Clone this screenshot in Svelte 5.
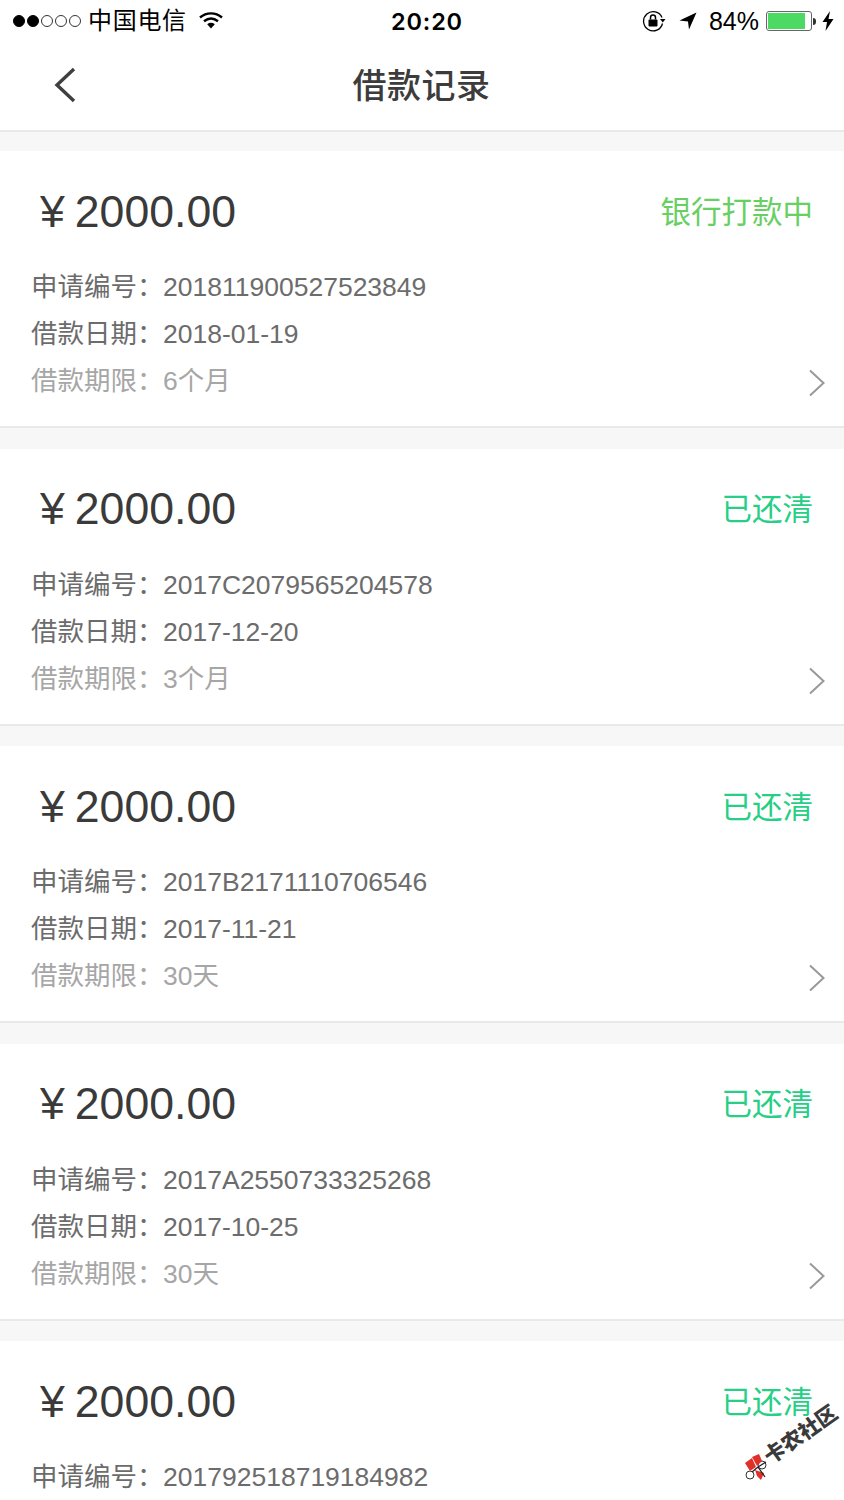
<script>
  const records = [
    { no: '201811900527523849', date: '2018-01-19', term: '6个月', status: '银行打款中', paying: true },
    { no: '2017C2079565204578', date: '2017-12-20', term: '3个月', status: '已还清' },
    { no: '2017B2171110706546', date: '2017-11-21', term: '30天', status: '已还清' },
    { no: '2017A2550733325268', date: '2017-10-25', term: '30天', status: '已还清' },
    { no: '201792518719184982', date: '2017-09-25', term: '30天', status: '已还清' }
  ];
</script>

<div class="page">
  <header class="status">
    <div class="side left">
      <span class="dots">
        <i class="on"></i><i class="on"></i><i></i><i></i><i></i>
      </span>
      <span class="carrier">中国电信</span>
      <svg class="wifi" width="26" height="18" viewBox="0 0 26 18">
        <path d="M2 6.500C8.500 1 17.500 1 24 6.500" fill="none" stroke="#000" stroke-width="2.400" />
        <path d="M6 10.200C10.500 6.600 15.500 6.600 20 10.200" fill="none" stroke="#000" stroke-width="2.400" />
        <path d="M9.200 13.200C11.500 11.400 14.500 11.400 16.800 13.200L13 17.400Z" fill="#000" />
      </svg>
    </div>
    <div class="clock">20:20</div>
    <div class="side right">
      <svg class="lock" width="24" height="22" viewBox="0 0 24 22">
        <path d="M20.500 13.500A9.600 9.600 0 1 1 20 7.500" fill="none" stroke="#000" stroke-width="1.300" />
        <path d="M18 9h5.500l-2.700 3.500Z" fill="#000" />
        <rect x="6.500" y="9.500" width="9" height="7" rx="1" fill="#000" />
        <path d="M8.500 9.500V7.500a2.500 2.500 0 0 1 5 0v2" fill="none" stroke="#000" stroke-width="1.500" />
      </svg>
      <svg class="arrow" width="18" height="18" viewBox="0 0 18 18">
        <path d="M17.500 0.500L0.500 8.500L9 9.500L10 17.500Z" fill="#000" />
      </svg>
      <span class="pct">84%</span>
      <span class="battery"><span class="level"></span></span>
      <span class="nub"></span>
      <svg class="bolt" width="12" height="20" viewBox="0 0 12 20">
        <path d="M8 0L0.500 11H5L3.500 20L11.500 8H6.500Z" fill="#000" />
      </svg>
    </div>
  </header>

  <nav class="bar">
    <svg class="back" width="24" height="36" viewBox="0 0 24 36">
      <path d="M21 2L4 18L21 34" fill="none" stroke="#3f3f3f" stroke-width="3.400" />
    </svg>
    <h1>借款记录</h1>
  </nav>

  <main class="list">
    {#each records as r}
      <section class="card">
        <div class="top">
          <div class="amount"><span class="yen">¥</span>2000.00</div>
          <div class="state" class:paying={r.paying}>{r.status}</div>
        </div>
        <dl>
          <div class="row"><dt>申请编号：</dt><dd>{r.no}</dd></div>
          <div class="row"><dt>借款日期：</dt><dd>{r.date}</dd></div>
          <div class="row faint"><dt>借款期限：</dt><dd>{r.term}</dd></div>
        </dl>
        <svg class="chev" width="18" height="28" viewBox="0 0 18 28">
          <path d="M2 1.500L15.500 14L2 26.500" fill="none" stroke="#999" stroke-width="2" />
        </svg>
      </section>
    {/each}
  </main>

  <div class="mark">
    <svg class="knot" width="32" height="32" viewBox="0 0 32 32">
      <g transform="rotate(35 16 16)">
        <circle cx="23" cy="14" r="4" fill="#fff" stroke="#333" stroke-width="1" />
        <circle cx="11" cy="24" r="4" fill="#fff" stroke="#333" stroke-width="1" />
        <path d="M6 12L13 7L17 16L11 20Z" fill="#e0302a" />
        <path d="M13 6L20 3L23 10L18 15Z" fill="#e0302a" />
        <path d="M16 19L25 22L22 29L18 25Z" fill="#e0302a" />
        <path d="M19 16L26 26M19 16L13 21M19 16L27 11" stroke="#222" stroke-width="1.300" fill="none" />
      </g>
    </svg>
    <span>卡农社区</span>
  </div>
</div>

<style>
  :global(body) {
    margin: 0;
    background: #fff;
  }

  .page {
    position: relative;
    height: 1500px;
    overflow: hidden;
    background: #f7f7f7;
    font-family: "Liberation Sans", "Noto Sans CJK SC", sans-serif;
  }

  .status {
    height: 42px;
    padding: 0 10px 0 13px;
    display: flex;
    align-items: center;
    justify-content: space-between;
    background: #fff;
    color: #000;
  }

  .side {
    display: flex;
    align-items: center;
  }

  .left {
    width: 307px;
  }

  .right {
    width: 300px;
    justify-content: flex-end;
  }

  .dots {
    display: flex;
    gap: 2px;
  }

  .dots i {
    width: 12px;
    height: 12px;
    box-sizing: border-box;
    border: 1px solid #333;
    border-radius: 50%;
  }

  .dots i.on {
    background: #000;
    border-color: #000;
  }

  .carrier {
    margin-left: 7px;
    font-size: 24px;
    line-height: 42px;
    letter-spacing: 0.700px;
  }

  .wifi {
    margin-left: 11px;
    margin-bottom: 3px;
  }

  .clock {
    font-size: 23.500px;
    letter-spacing: 0.800px;
    font-family: "Inter", sans-serif;
    font-weight: 600;
  }

  .lock {
    margin-right: 13px;
  }

  .arrow {
    margin-right: 12px;
  }

  .pct {
    font-size: 25px;
    margin-right: 7px;
  }

  .battery {
    width: 46px;
    height: 20px;
    box-sizing: border-box;
    border: 1px solid #666;
    border-radius: 3px;
    padding: 1px;
    display: flex;
  }

  .level {
    width: 37px;
    background: #4cd964;
  }

  .nub {
    width: 3px;
    height: 7px;
    margin-left: 1px;
    background: #333;
    border-radius: 0 3px 3px 0;
  }

  .bolt {
    margin-left: 6px;
  }

  .bar {
    position: relative;
    height: 88px;
    display: flex;
    align-items: center;
    justify-content: center;
    background: #fff;
    border-bottom: 2px solid #e9e9e9;
  }

  .back {
    position: absolute;
    left: 53px;
    top: 25px;
  }

  h1 {
    margin: -6px 1px 0 0;
    font-size: 34px;
    font-weight: 500;
    color: #3c3c3c;
    letter-spacing: 0.500px;
  }

  .list {
    display: flex;
    flex-direction: column;
    gap: 20.500px;
    padding-top: 19px;
  }

  .card {
    position: relative;
    height: 275px;
    flex: none;
    background: #fff;
    border-bottom: 2px solid #e9e9e9;
  }

  .top {
    height: 120px;
    padding: 0 31px 0 40px;
    display: flex;
    align-items: center;
    justify-content: space-between;
  }

  .amount {
    margin-top: 1px;
    display: flex;
    align-items: center;
    font-size: 44.600px;
    color: #3a3a3a;
  }

  .yen {
    margin-right: 10px;
  }

  .state {
    margin-top: -3px;
    font-size: 30.500px;
    color: #26cf85;
  }

  .state.paying {
    color: #68cf63;
  }

  dl {
    margin: 0;
    padding-left: 31px;
  }

  .row {
    height: 47px;
    line-height: 32px;
    display: flex;
    align-items: baseline;
    font-size: 26.500px;
    color: #6c6c6c;
  }

  .faint {
    color: #a6a6a6;
  }

  dt {
    width: 132px;
    white-space: nowrap;
  }

  dd {
    margin: 0;
  }

  .chev {
    position: absolute;
    right: 18px;
    top: 218px;
  }

  .mark {
    position: absolute;
    left: 739px;
    top: 1451px;
    display: flex;
    align-items: center;
    transform: rotate(-35deg);
    transform-origin: 16px 16px;
    color: #3a3a3a;
    font-size: 21px;
    line-height: 32px;
    font-weight: 900;
    white-space: nowrap;
  }

  .knot {
    margin-right: -2px;
  }
</style>
